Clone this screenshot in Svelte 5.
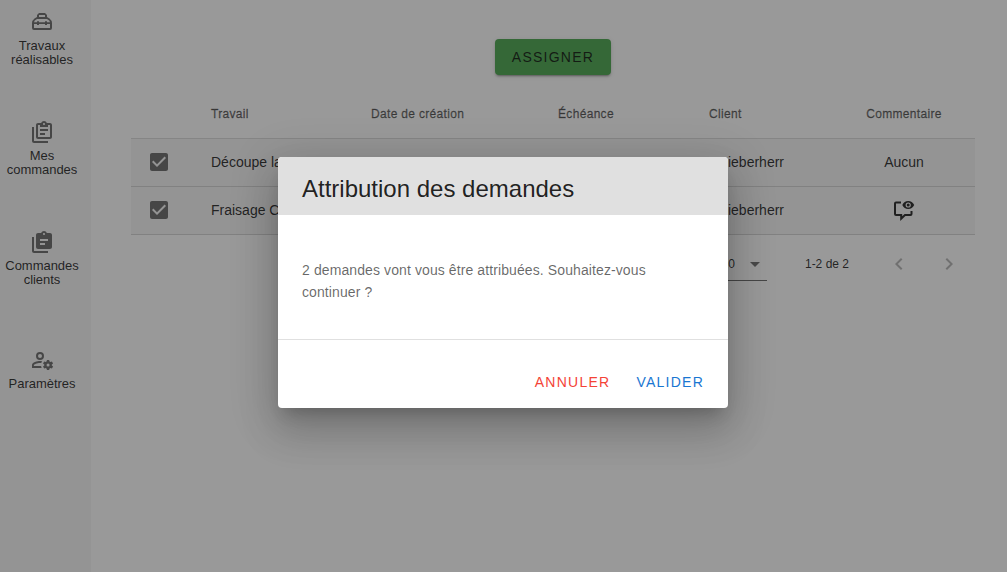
<script>
  const clip = 'M4 7V21H18V23H4C2.9 23 2 22.1 2 21V7H4M20 3C21.1 3 22 3.9 22 5V17C22 18.1 21.1 19 20 19H8C6.9 19 6 18.1 6 17V5C6 3.9 6.9 3 8 3H11.18C11.6 1.84 12.7 1 14 1C15.3 1 16.4 1.84 16.82 3H20M14 3C13.45 3 13 3.45 13 4C13 4.55 13.45 5 14 5C14.55 5 15 4.55 15 4C15 3.45 14.55 3 14 3';
  const items = [
    { lines: ['Travaux', 'réalisables'], path: 'M9 3H15L17 5V7L19.5 8.5Q22 10.5 22 13V18Q22 20 20 20H4Q2 20 2 18V13Q2 10.5 4.5 8.5L7 7V5ZM9 5V7H15V5ZM7 9Q4 10.5 4 12.2H7V11.2H9V12.2H15V11.2H17V12.2H20Q20 10.5 17 9ZM4 14V18H20V14H17V15H15V14H9V15H7V14Z' },
    { lines: ['Mes', 'commandes'], path: clip + 'M10 7V5H8V17H20V5H18V7M15 15H10V13H15M18 11H10V9H18V11Z' },
    { lines: ['Commandes', 'clients'], path: clip + 'M10 15V13H15V15M10 11V9H18V11Z' },
    { lines: ['Paramètres'], path: 'M10 4A4 4 0 0 0 6 8A4 4 0 0 0 10 12A4 4 0 0 0 14 8A4 4 0 0 0 10 4M10 6A2 2 0 0 1 12 8A2 2 0 0 1 10 10A2 2 0 0 1 8 8A2 2 0 0 1 10 6M17 12L16.5 13.55L15.72 14L14.2 13.5L13 15.5L14.28 16.5V17.5L13 18.5L14.2 20.5L15.72 20L16.5 20.45L17 22H19.11L19.59 20.45L20.38 20L21.9 20.5L23.1 18.5L21.82 17.5V16.5L23.1 15.5L21.9 13.5L20.38 14L19.59 13.55L19.11 12ZM18.05 15.5A1.5 1.5 0 1 1 18.05 18.5A1.5 1.5 0 1 1 18.05 15.5M10 13C7.33 13 2 14.33 2 17V20H11.67C11.39 19.41 11.19 18.77 11.09 18.1H3.9V17C3.9 16.36 7.03 14.9 10 14.9C10.43 14.9 10.87 14.94 11.3 15C11.5 14.36 11.77 13.76 12.12 13.21C11.34 13.08 10.6 13 10 13' }
  ];
  const rows = [
    { job: 'Découpe laser', client: 'Lieberherr', comment: 'Aucun' },
    { job: 'Fraisage CNC', client: 'Lieberherr', comment: '' }
  ];
</script>

<div class="app">
  <nav>
    {#each items as item}
      <div class="item">
        <svg viewBox="0 0 24 24"><path fill-rule="evenodd" d={item.path} /></svg>
        <div class="label">{#each item.lines as l}<span>{l}</span>{/each}</div>
      </div>
    {/each}
  </nav>
  <main>
    <button class="assign">Assigner</button>
    <div class="table">
      <div class="tr head"><span></span><span>Travail</span><span>Date de création</span><span>Échéance</span><span>Client</span><span class="center">Commentaire</span></div>
      {#each rows as r}
        <div class="tr row">
          <span class="check"><svg viewBox="0 0 24 24"><path d="M10 17L5 12L6.41 10.58L10 14.17L17.59 6.58L19 8M19 3H5C3.89 3 3 3.89 3 5V19C3 20.1 3.9 21 5 21H19C20.1 21 21 20.1 21 19V5C21 3.89 20.1 3 19 3Z" /></svg></span>
          <span>{r.job}</span><span></span><span></span><span class="client">{r.client}</span>
          <span class="center">
            {#if r.comment}{r.comment}{:else}
              <svg class="msg" viewBox="0 0 24 24">
                <path d="M9 4.5H4Q3 4.5 3 5.5V16Q3 17 4 17H9.2V20.6L13 17H18.5Q19.5 17 19.5 16V13" fill="none" stroke="rgba(0,0,0,.87)" stroke-width="2" />
                <path fill-rule="evenodd" d="M10.3 7Q12.2 3 16.2 3T22.2 7Q20.2 11 16.2 11T10.3 7M16.2 4.4A2.6 2.6 0 1 0 16.2 9.6A2.6 2.6 0 1 0 16.2 4.4M16.2 5.5A1.5 1.5 0 1 1 16.2 8.5A1.5 1.5 0 1 1 16.2 5.5" />
              </svg>
            {/if}
          </span>
        </div>
      {/each}
    </div>
    <footer>
      <div class="select"><span>10</span><svg viewBox="0 0 24 24"><path d="M7 10L12 15L17 10H7Z" /></svg></div>
      <span class="range">1-2 de 2</span>
      <svg class="chev" viewBox="0 0 24 24"><path d="M15.41 16.58L10.83 12L15.41 7.41L14 6L8 12L14 18Z" /></svg>
      <svg class="chev next" viewBox="0 0 24 24"><path d="M8.59 16.58L13.17 12L8.59 7.41L10 6L16 12L10 18Z" /></svg>
    </footer>
  </main>
</div>
<div class="scrim">
  <section class="dialog">
    <h2>Attribution des demandes</h2>
    <p>2 demandes vont vous être attribuées. Souhaitez-vous continuer ?</p>
    <div class="actions"><button class="cancel">Annuler</button><button class="ok">Valider</button></div>
  </section>
</div>

<style>
  :global(body) { overflow: hidden; }
  .app, .scrim { font-family: "Liberation Sans", Arial, sans-serif; color: rgba(0,0,0,.87); }
  .app { display: flex; height: 572px; background: #fff; }
  svg { width: 24px; height: 24px; display: block; flex: none; fill: rgba(0,0,0,.58); }
  nav { width: 91px; background: #f5f5f5; box-sizing: border-box; padding: 10px 7px 0 0; flex: none; }
  .item { height: 110px; display: flex; flex-direction: column; align-items: center; }
  .item:nth-child(3) { height: 118px; }
  .label { margin-top: 5px; font-size: 13px; line-height: 14px; text-align: center; letter-spacing: -.03px; }
  .label span { display: block; }
  main { flex: 1; padding: 39px 32px 0 40px; display: flex; flex-direction: column; }
  button { border: 0; background: none; font: 14px "Liberation Sans", Arial, sans-serif; letter-spacing: 1.25px; text-transform: uppercase; height: 36px; border-radius: 4px; padding: 0; }
  .assign { width: 116px; align-self: center; background: #47a54b; color: rgba(0,0,0,.87); box-shadow: 0 3px 1px -2px rgba(0,0,0,.2), 0 2px 2px rgba(0,0,0,.14), 0 1px 5px rgba(0,0,0,.12); }
  .table { margin-top: 15px; }
  .tr { display: grid; grid-template-columns: 64px 160px 187px 151px 140px 142px; height: 48px; box-sizing: border-box; align-items: center; border-bottom: 1px solid rgba(0,0,0,.14); }
  .head { height: 49px; }
  .tr > span { padding-left: 16px; white-space: nowrap; }
  .tr > .center { padding: 0; display: flex; justify-content: center; }
  .head { font-size: 12px; font-weight: 400; color: rgba(0,0,0,.6); letter-spacing: .32px; -webkit-text-stroke: .3px rgba(0,0,0,.6); }
  .row { font-size: 14px; background: #f5f5f5; padding-bottom: 2px; }
  .tr > .client { padding: 0 49px 0 0; justify-self: end; }
  .msg { fill: rgba(0,0,0,.87); }
  footer { display: flex; align-items: center; height: 57px; font-size: 12px; justify-content: flex-end; }
  .select { display: flex; align-items: center; height: 32px; border-bottom: 1px solid rgba(0,0,0,.6); width: 46px; justify-content: flex-end; gap: 8px; transform: translateY(1px); }
  .range { margin: 0 38px; }
  .chev { opacity: .5; }
  .next { margin: 0 14px 0 26px; }
  .scrim { position: absolute; inset: 0; background: rgba(33,33,33,.46); padding: 157px 0 0 278px; }
  .dialog { width: 450px; height: 251px; background: #fff; border-radius: 4px; overflow: hidden; box-shadow: 0 11px 15px -7px rgba(0,0,0,.2), 0 24px 38px 3px rgba(0,0,0,.14), 0 9px 46px 8px rgba(0,0,0,.12); }
  h2 { margin: 0; height: 58px; box-sizing: border-box; padding: 16px 24px 10px; font-size: 24px; line-height: 32px; font-weight: 400; background: #e0e0e0; }
  p { margin: 0; height: 125px; box-sizing: border-box; padding: 44px 24px 0; font-size: 14px; line-height: 22px; letter-spacing: .1px; color: rgba(0,0,0,.6); border-bottom: 1px solid rgba(0,0,0,.12); }
  .actions { display: flex; justify-content: flex-end; padding: 24px 24px 0; gap: 26px; }
  .cancel { color: #f44336; }
  .ok { color: #1976d2; }
</style>
